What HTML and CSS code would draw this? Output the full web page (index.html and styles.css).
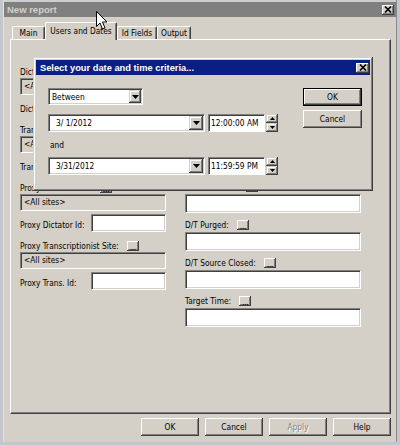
FILE: index.html
```html
<!DOCTYPE html>
<html>
<head>
<meta charset="utf-8">
<link rel="stylesheet" href="styles.css">
</head>
<body>
<div class="window">
  <div class="titlebar">
    <span class="title">New report</span>
    <span class="xbtn raised"><svg width="8" height="7" viewBox="0 0 8 7"><path d="M1 0.5L7 6.5M7 0.5L1 6.5" stroke="#000" stroke-width="1.6"/></svg></span>
  </div>
  <div class="tabs">
    <div class="tab t-main">Main</div>
    <div class="tab t-users active">Users and Dates</div>
    <div class="tab t-id">Id Fields</div>
    <div class="tab t-out">Output</div>
  </div>
  <div class="panel">
    <div class="col-left">
      <div class="block">
        <div class="lbl"><span>Dictator Site:</span><span class="dots raised">...</span></div>
        <div class="site-field">&lt;All sites&gt;</div>
        <div class="id-row"><span class="id-lbl">Dictator Id:</span><span class="input id-input"></span></div>
      </div>
      <div class="block">
        <div class="lbl"><span>Transcriptionist Site:</span><span class="dots raised">...</span></div>
        <div class="site-field">&lt;All sites&gt;</div>
        <div class="id-row"><span class="id-lbl">Trans. Id:</span><span class="input id-input"></span></div>
      </div>
      <div class="block">
        <div class="lbl"><span>Proxy Dictator Site:</span><span class="dots raised">...</span></div>
        <div class="site-field">&lt;All sites&gt;</div>
        <div class="id-row"><span class="id-lbl">Proxy Dictator Id:</span><span class="input id-input"></span></div>
      </div>
      <div class="block">
        <div class="lbl"><span>Proxy Transcriptionist Site:</span><span class="dots raised">...</span></div>
        <div class="site-field">&lt;All sites&gt;</div>
        <div class="id-row"><span class="id-lbl">Proxy Trans. Id:</span><span class="input id-input"></span></div>
      </div>
    </div>
    <div class="col-right">
      <div class="rrow"><div class="lbl"><span>D/T Dictated:</span><span class="dots raised">...</span></div><div class="input r-input"></div></div>
      <div class="rrow"><div class="lbl"><span>D/T Transcribed:</span><span class="dots raised">...</span></div><div class="input r-input"></div></div>
      <div class="rrow"><div class="lbl"><span>D/T Signed:</span><span class="dots raised">...</span></div><div class="input r-input"></div></div>
      <div class="rrow"><div class="lbl"><span>D/T Delivered:</span><span class="dots raised">...</span></div><div class="input r-input"></div></div>
      <div class="rrow"><div class="lbl"><span>D/T Purged:</span><span class="dots raised">...</span></div><div class="input r-input"></div></div>
      <div class="rrow"><div class="lbl"><span>D/T Source Closed:</span><span class="dots raised">...</span></div><div class="input r-input"></div></div>
      <div class="rrow"><div class="lbl"><span>Target Time:</span><span class="dots raised">...</span></div><div class="input r-input"></div></div>
    </div>
  </div>
  <div class="buttons">
    <div class="btn">OK</div>
    <div class="btn">Cancel</div>
    <div class="btn disabled">Apply</div>
    <div class="btn">Help</div>
  </div>

  <div class="dialog">
    <div class="dlg-title">
      <span class="dlg-caption">Select your date and time criteria...</span>
      <span class="xbtn dlg-x raised"><svg width="8" height="7" viewBox="0 0 8 7"><path d="M1 0.5L7 6.5M7 0.5L1 6.5" stroke="#000" stroke-width="1.6"/></svg></span>
    </div>
    <div class="dlg-body">
      <div class="dlg-fields">
        <div class="combo c-mode"><span class="val">Between</span><span class="drop frame"><svg width="7" height="4" viewBox="0 0 7 4"><path d="M0 0H7L3.5 4Z" fill="#000"/></svg></span></div>
        <div class="dt-row r-from">
          <div class="combo c-date"><span class="val">3/ 1/2012</span><span class="drop frame"><svg width="7" height="4" viewBox="0 0 7 4"><path d="M0 0H7L3.5 4Z" fill="#000"/></svg></span></div>
          <div class="time">12:00:00 AM</div>
          <div class="spin">
            <span class="spin-btn frame"><svg width="5" height="3" viewBox="0 0 5 3"><path d="M0 3H5L2.5 0Z" fill="#000"/></svg></span>
            <span class="spin-btn frame"><svg width="5" height="3" viewBox="0 0 5 3"><path d="M0 0H5L2.5 3Z" fill="#000"/></svg></span>
          </div>
        </div>
        <div class="and">and</div>
        <div class="dt-row">
          <div class="combo c-date"><span class="val">3/31/2012</span><span class="drop frame"><svg width="7" height="4" viewBox="0 0 7 4"><path d="M0 0H7L3.5 4Z" fill="#000"/></svg></span></div>
          <div class="time">11:59:59 PM</div>
          <div class="spin">
            <span class="spin-btn frame"><svg width="5" height="3" viewBox="0 0 5 3"><path d="M0 3H5L2.5 0Z" fill="#000"/></svg></span>
            <span class="spin-btn frame"><svg width="5" height="3" viewBox="0 0 5 3"><path d="M0 0H5L2.5 3Z" fill="#000"/></svg></span>
          </div>
        </div>
      </div>
      <div class="dlg-buttons">
        <div class="btn default">OK</div>
        <div class="btn">Cancel</div>
      </div>
    </div>
  </div>

  <svg class="cursor" width="12" height="19" viewBox="0 0 12 19"><path d="M0.5 0.5V15.5L4 12L6.5 18L9 17L6.5 11H11Z" fill="#fff" stroke="#000" stroke-width="1" stroke-linejoin="miter"/></svg>
</div>
</body>
</html>
```

FILE: styles.css
```css
* { box-sizing: border-box; }

body {
  margin: 0;
  background: #d4d0c8;
  font-family: "DejaVu Sans Condensed", "Liberation Sans", sans-serif;
  font-size: 8.3px;
  color: #000;
}

.window {
  position: relative;
  width: 400px;
  height: 445px;
  background: #d4d0c8;
  padding: 2px 4px 0 4px;
  box-shadow: inset 3px 0 #c3c6cd, inset -3px 0 #c3c6cd, inset 0 -3px #c3c6cd, inset 4px 0 #e4e2dc, inset -4px 0 #8c8c8c, inset 0 2px #cfcfcf;
}

.titlebar {
  height: 15px;
  background: #808080;
  display: flex;
  align-items: center;
  padding: 0 2px 0 3px;
}

.title {
  font-family: "Liberation Sans", sans-serif;
  font-weight: bold;
  font-size: 9.5px;
  color: #d4d0c8;
}

.raised {
  background: #d4d0c8;
  box-shadow: inset -1px -1px #404040, inset 1px 1px #fff, inset -2px -2px #808080;
}

.frame {
  background: #d4d0c8;
  box-shadow: inset -1px -1px #404040, inset 1px 1px #d4d0c8, inset -2px -2px #808080, inset 2px 2px #fff;
}

.xbtn {
  margin-left: auto;
  width: 12px;
  height: 10px;
  display: flex;
  align-items: center;
  justify-content: center;
}

/* Tabs */
.tabs {
  display: flex;
  align-items: flex-end;
  height: 17px;
  margin: 5px 0 0 8px;
}

.tab {
  height: 13px;
  line-height: 12px;
  text-align: center;
  white-space: nowrap;
  border-top: 1px solid #fff;
  border-left: 1px solid #fff;
  border-right: 1px solid #404040;
  box-shadow: inset -1px 0 #808080;
  border-radius: 2px 2px 0 0;
  background: #d4d0c8;
}

.t-main { width: 33px; }
.t-users { width: 72px; }
.t-id { width: 40px; }
.t-out { width: 34px; }

.tab.active {
  height: 18px;
  line-height: 16px;
  margin-bottom: -1px;
  position: relative;
  z-index: 1;
}

/* Panel */
.panel {
  margin: 0 5px 0 6px;
  height: 375px;
  border: 1px solid;
  border-color: #fff #404040 #404040 #fff;
  box-shadow: inset -1px -1px #808080;
  padding: 26px 0 0 9px;
  display: flex;
  gap: 19px;
}

.col-left { width: 146px; }
.col-right { width: 176px; padding-top: 1px; }

.lbl {
  height: 12px;
  display: flex;
  align-items: center;
  gap: 8px;
  white-space: nowrap;
}

.dots {
  width: 12px;
  height: 10px;
  font-size: 9px;
  line-height: 7px;
  display: flex;
  align-items: flex-end;
  justify-content: center;
  letter-spacing: -0.5px;
}

.block { margin-bottom: 8px; }

.site-field {
  height: 17px;
  border: 1px solid;
  border-color: #808080 #fff #fff #808080;
  box-shadow: inset 1px 1px #404040, inset -1px -1px #d4d0c8;
  background: #d4d0c8;
  padding-left: 3px;
  line-height: 14px;
  white-space: nowrap;
}

.input {
  display: block;
  background: #fff;
  border: 1px solid;
  border-color: #808080 #fff #fff #808080;
  box-shadow: inset 1px 1px #404040, inset -1px -1px #d4d0c8;
}

.id-row {
  margin-top: 3px;
  height: 18px;
  display: flex;
  align-items: flex-end;
}

.id-lbl {
  line-height: 12px;
  padding-bottom: 1px;
  white-space: nowrap;
}

.id-input {
  margin-left: auto;
  width: 75px;
  height: 18px;
}

.rrow { margin-bottom: 6px; }

.r-input {
  margin-top: 1px;
  height: 19px;
  width: 176px;
}

/* Bottom buttons */
.buttons {
  display: flex;
  justify-content: flex-end;
  gap: 6px;
  margin: 4px 5px 0 0;
}

.btn {
  width: 58px;
  height: 18px;
  line-height: 18px;
  text-align: center;
  background: #d4d0c8;
  box-shadow: inset -1px -1px #404040, inset 1px 1px #fff, inset -2px -2px #808080;
}

.btn.disabled {
  color: #808080;
  text-shadow: 1px 1px #fff;
}

.btn.default {
  box-shadow: inset 0 0 0 1px #000, inset -2px -2px #404040, inset 2px 2px #fff, inset -3px -3px #808080;
}

/* Dialog */
.dialog {
  position: absolute;
  left: 33px;
  top: 57px;
  width: 340px;
  height: 134px;
  background: #d4d0c8;
  padding: 3px;
  box-shadow: inset -1px -1px #404040, inset 1px 1px #d4d0c8, inset -2px -2px #808080, inset 2px 2px #fff;
  z-index: 2;
}

.dlg-title {
  height: 15px;
  background: #0a1f84;
  display: flex;
  align-items: center;
  padding: 0 1px 0 4px;
}

.dlg-caption {
  font-family: "Liberation Sans", sans-serif;
  font-weight: bold;
  font-size: 9.3px;
  color: #fff;
}

.dlg-x { width: 13px; }

.dlg-body {
  display: flex;
  padding: 13px 8px 0 12px;
}

.dlg-fields {
  display: flex;
  flex-direction: column;
}

.combo {
  display: flex;
  align-items: stretch;
  padding: 1px;
  background: #fff;
  border: 1px solid;
  border-color: #808080 #fff #fff #808080;
  box-shadow: inset 1px 1px #404040, inset -1px -1px #d4d0c8;
}

.combo .val {
  flex: 1;
  display: flex;
  align-items: center;
  white-space: pre;
}

.c-mode { width: 95px; height: 17px; }
.c-mode .val { padding-left: 2px; }

.c-date { width: 157px; height: 18px; }
.c-date .val { padding-left: 6px; }

.drop {
  width: 12px;
  display: flex;
  align-items: center;
  justify-content: center;
}

.c-date .drop { width: 14px; }

.dt-row {
  display: flex;
  height: 18px;
}

.r-from { margin-top: 9px; }

.time {
  margin-left: 3px;
  width: 57px;
  height: 18px;
  background: #fff;
  border: 1px solid;
  border-color: #808080 #fff #fff #808080;
  box-shadow: inset 1px 1px #404040;
  padding-left: 2px;
  line-height: 16px;
  white-space: nowrap;
}

.spin {
  margin-left: 1px;
  width: 12px;
  display: flex;
  flex-direction: column;
}

.spin-btn {
  height: 9px;
  display: flex;
  align-items: center;
  justify-content: center;
}

.and {
  margin-top: 7px;
  height: 12px;
  line-height: 12px;
  padding-left: 2px;
  margin-bottom: 6px;
}

.dlg-buttons {
  margin-left: auto;
  display: flex;
  flex-direction: column;
  gap: 4px;
  width: 59px;
}

.dlg-buttons .btn { width: 59px; }

.cursor {
  position: absolute;
  left: 96px;
  top: 11px;
  z-index: 3;
}
```
